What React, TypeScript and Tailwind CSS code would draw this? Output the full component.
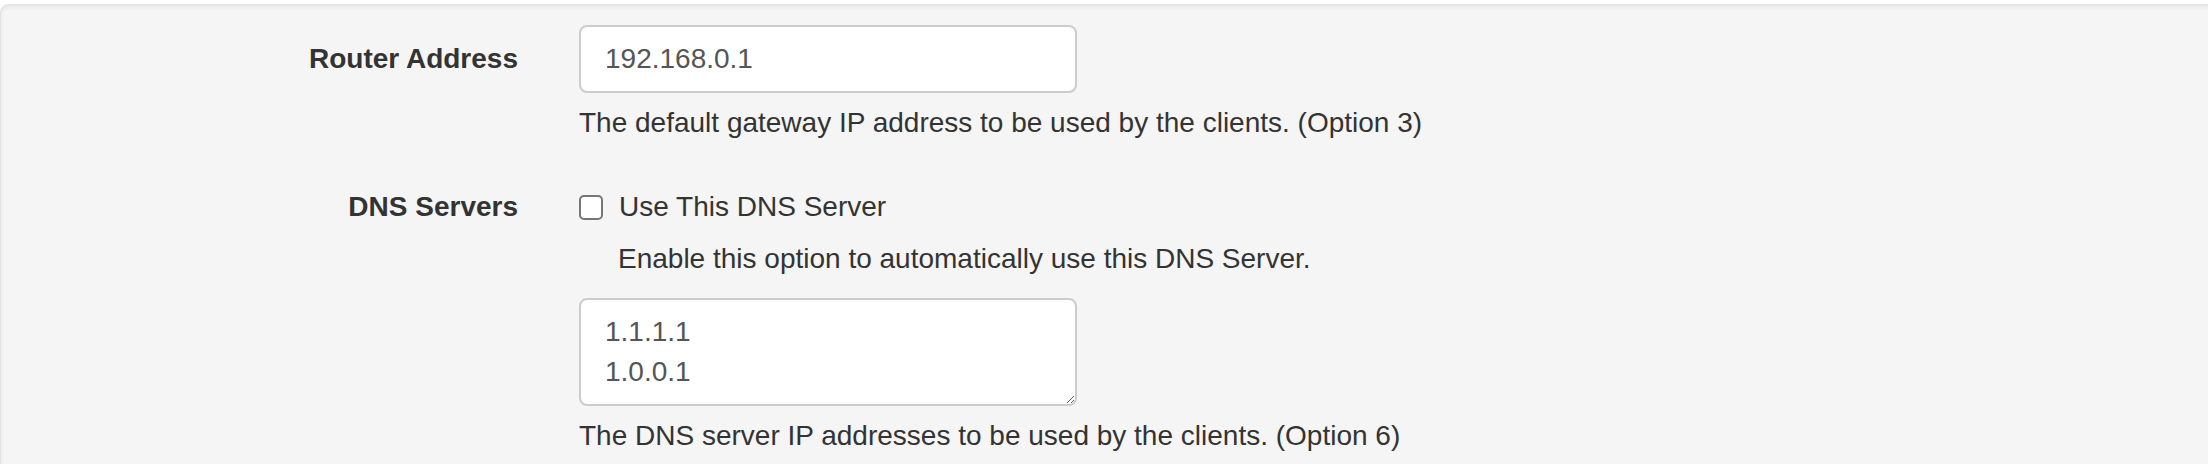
import { useState } from "react";

export default function App() {
  const [useDns, setUseDns] = useState(false);
  const [router, setRouter] = useState("192.168.0.1");
  const [dns, setDns] = useState("1.1.1.1\n1.0.0.1");

  return (
    <div className="h-[464px] overflow-hidden bg-white pt-1 font-['Liberation_Sans',Arial,sans-serif] text-[28px] leading-[40px] text-[#333]">
      <div className="-mr-6 min-h-[500px] rounded-tl-lg border border-[#e3e3e3] bg-[#f5f5f5] pt-[20px] shadow-[inset_0_2px_4px_rgba(0,0,0,0.07)]">
        {/* Router address */}
        <div className="flex">
          <label className="w-[517px] shrink-0 text-right font-bold leading-[68px]">Router Address</label>
          <div className="ml-[61px]">
            <input
              className="block h-[68px] w-[498px] rounded-lg border-2 border-[#ccc] bg-white px-6 text-[#555] outline-none"
              value={router}
              onChange={(e) => setRouter(e.target.value)}
            />
            <p className="mt-[10px]">The default gateway IP address to be used by the clients. (Option 3)</p>
          </div>
        </div>

        {/* DNS servers */}
        <div className="mt-[44px] flex">
          <label className="w-[517px] shrink-0 text-right font-bold">DNS Servers</label>
          <div className="ml-[61px]">
            <label className="flex h-[40px] items-center gap-[16px]">
              <input
                type="checkbox"
                checked={useDns}
                onChange={(e) => setUseDns(e.target.checked)}
                className="h-[25px] w-[24px] appearance-none rounded-[5px] border-2 border-[#767676] bg-white checked:bg-[#0075ff]"
              />
              <span>Use This DNS Server</span>
            </label>
            <p className="mt-[12px] pl-[39px]">Enable this option to automatically use this DNS Server.</p>
            <textarea
              className="mt-[19px] block h-[108px] w-[498px] rounded-lg border-2 border-[#ccc] bg-white px-6 py-[12px] leading-[40px] text-[#555] outline-none"
              value={dns}
              onChange={(e) => setDns(e.target.value)}
            />
            <p className="mt-[10px]">The DNS server IP addresses to be used by the clients. (Option 6)</p>
          </div>
        </div>
      </div>
    </div>
  );
}
